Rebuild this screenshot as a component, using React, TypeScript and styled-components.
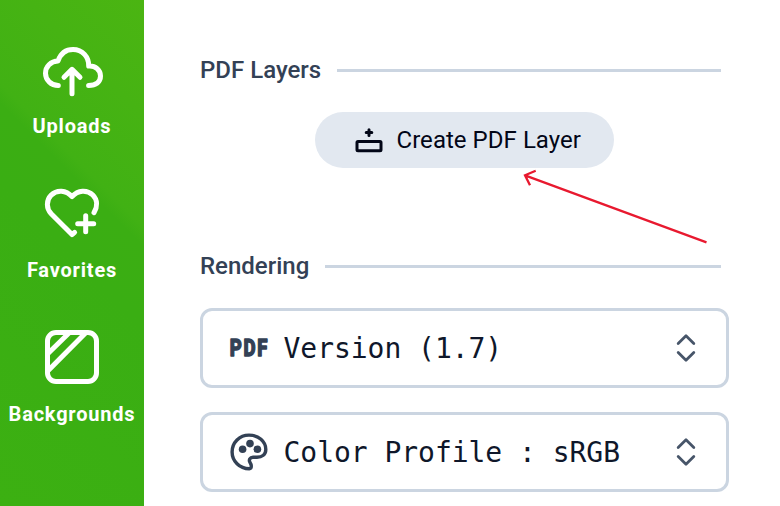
import React from 'react';
import styled, { createGlobalStyle } from 'styled-components';

const GlobalStyle = createGlobalStyle`
  * { box-sizing: border-box; }
  body { margin: 0; background: #fff; overflow: hidden; font-family: Roboto, sans-serif; }
`;

const Page = styled.div`
  display: flex;
  position: relative;
  width: 780px;
  height: 506px;
  background: #fff;
`;

const Sidebar = styled.nav`
  display: flex;
  flex-direction: column;
  flex: 0 0 144px;
  padding-top: 36px;
  background: linear-gradient(45deg, #3cb012 0%, #3aae13 50%, #3bae13 62%, #41b114 65%, #46b313 82%, #4bb512 100%);
`;

const SidebarItem = styled.a`
  display: flex;
  flex-direction: column;
  align-items: center;
  height: 144px;
  color: #fff;
`;

const SidebarIcon = styled.svg`
  width: 72px;
  height: 72px;
  fill: none;
  stroke: currentColor;
  stroke-width: 5;
  stroke-linecap: round;
  stroke-linejoin: round;
`;

const SidebarLabel = styled.span`
  margin-top: 4px;
  font-size: 20px;
  line-height: 28px;
  font-weight: 700;
  letter-spacing: 0.8px;
  white-space: nowrap;
`;

const Panel = styled.main`
  display: flex;
  flex-direction: column;
  width: 529px;
  margin-left: 56px;
  padding-top: 54px;
`;

const SectionTitle = styled.h2`
  display: flex;
  align-items: center;
  gap: 16px;
  height: 32px;
  margin: 0 8px 0 0;
  color: #334155;
  font-size: 24px;
  line-height: 32px;
  font-weight: 500;
  white-space: nowrap;

  &::after {
    content: '';
    flex: 1;
    height: 3px;
    margin-top: 1px;
    background: #cbd5e1;
  }
`;

const CreateButton = styled.button`
  display: flex;
  align-items: center;
  align-self: center;
  gap: 12.5px;
  width: 299px;
  height: 56px;
  margin: 26px 0 82px;
  padding: 0 0 0 39px;
  border: 0;
  border-radius: 28px;
  background: #e2e8f0;
  color: #020617;
  font: 450 24px/32px Roboto, sans-serif;
  letter-spacing: 0.04px;
  white-space: nowrap;
`;

const ButtonIcon = styled.svg`
  width: 30px;
  height: 30px;
  fill: none;
  stroke: currentColor;
  stroke-width: 3;
  stroke-linecap: round;
`;

const Fields = styled.div`
  display: grid;
  gap: 24px;
  margin-top: 26px;
`;

const Select = styled.div`
  display: flex;
  align-items: center;
  height: 80px;
  padding: 0 26px 0 25px;
  border: 3px solid #cbd5e1;
  border-radius: 12px;
  color: #0f172a;
`;

const SelectIcon = styled.svg`
  width: 42px;
  height: 42px;
  overflow: visible;
  color: #334155;
`;

const SelectValue = styled.span`
  flex: 1;
  margin-left: 13.5px;
  padding-top: 2px;
  font-family: 'DejaVu Sans Mono', monospace;
  font-size: 28px;
  line-height: 40px;
  letter-spacing: -0.035px;
  white-space: pre;
`;

const Chevrons = styled.svg`
  width: 28px;
  height: 36px;
  fill: none;
  stroke: #475569;
  stroke-width: 2.8;
  stroke-linecap: round;
  stroke-linejoin: round;
`;

const Pointer = styled.svg`
  position: absolute;
  left: 515px;
  top: 162px;
  width: 200px;
  height: 88px;
  fill: none;
  stroke: #e8192f;
  stroke-width: 2.3;
  pointer-events: none;
`;

const PdfText = styled.text`
  font: 800 23.5px Roboto, sans-serif;
  letter-spacing: 2.2px;
  fill: currentColor;
  stroke: currentColor;
  stroke-width: 1.4;
  stroke-linejoin: round;
`;

const UpDown = () => (
  <Chevrons viewBox="0 0 28 36">
    <path d="M6.2 13.5 14 5.8l7.8 7.7M6.2 22.5l7.8 7.7 7.8-7.7" />
  </Chevrons>
);

const PdfIcon = () => (
  <SelectIcon viewBox="0 0 42 42">
    <PdfText transform="translate(1.8 29.3) scale(0.79 1)">PDF</PdfText>
  </SelectIcon>
);

const PaletteIcon = () => (
  <SelectIcon viewBox="228 431 42 42">
    <path
      d="M249.3 468.7C239.5 468.7 232.1 461 232.1 452C232.1 442.5 239.5 435.1 249 435.1C258.5 435.1 265.8 441.5 265.8 449.5C265.8 454.5 262 457.3 257 457.3H253C250 457.3 248.5 460 250 462.5C250.8 463.7 251.3 464.7 251.3 466C251.3 467.7 250.7 468.7 249.3 468.7Z"
      fill="none"
      stroke="currentColor"
      strokeWidth="3.4"
    />
    <circle cx="242.6" cy="449.2" r="3.8" fill="currentColor" />
    <circle cx="250" cy="443.6" r="3.8" fill="currentColor" />
    <circle cx="257.4" cy="449.2" r="3.8" fill="currentColor" />
  </SelectIcon>
);

export default function App() {
  return (
    <>
      <GlobalStyle />
      <Page>
        <Sidebar>
          <SidebarItem>
            <SidebarIcon viewBox="36 36 72 72">
              <path d="M58.3 85.5C51 85.5 45.5 80 45.5 73.2C45.5 66.5 50.7 61.2 58 61C60.5 53.8 66 49.5 73 49.5C82.5 49.5 89 57 88.7 66C95.5 65.5 100.5 70 100.5 76C100.5 82 96 85.5 88.6 85.5" />
              <path d="M72 93.7V70M64 77.3L72 69.3L80 77.3" />
            </SidebarIcon>
            <SidebarLabel>Uploads</SidebarLabel>
          </SidebarItem>
          <SidebarItem>
            <SidebarIcon viewBox="36 180 72 72">
              <path d="M94 212.6C97.5 207 97.7 200 92.8 195.1C87 189.5 78 190 72 196.7C66 190 57 189.5 51.2 195.1C46 200.5 46.2 208.3 51.2 213.7L72 234.6L74.6 232.3" />
              <path d="M85.7 215.8V231.8M77.7 223.8H93.7" />
            </SidebarIcon>
            <SidebarLabel>Favorites</SidebarLabel>
          </SidebarItem>
          <SidebarItem>
            <SidebarIcon viewBox="36 324 72 72">
              <rect x="47.5" y="332.5" width="49" height="49" rx="8.5" />
              <path d="M48 353.5L69 333M48 370.8L85.5 333" />
            </SidebarIcon>
            <SidebarLabel>Backgrounds</SidebarLabel>
          </SidebarItem>
        </Sidebar>
        <Panel>
          <SectionTitle>PDF Layers</SectionTitle>
          <CreateButton>
            <ButtonIcon viewBox="354 125 30 30">
              <rect x="357" y="141.4" width="24" height="9.3" rx="1" />
              <path d="M369 129.8v5.6M366.2 132.6h5.6" />
            </ButtonIcon>
            Create PDF Layer
          </CreateButton>
          <SectionTitle>Rendering</SectionTitle>
          <Fields>
            <Select>
              <PdfIcon />
              <SelectValue>Version (1.7)</SelectValue>
              <UpDown />
            </Select>
            <Select>
              <PaletteIcon />
              <SelectValue>Color Profile : sRGB</SelectValue>
              <UpDown />
            </Select>
          </Fields>
        </Panel>
        <Pointer viewBox="515 162 200 88">
          <path d="M706.5 242.3L525 175.3M535.7 170.7L525 175.3L530 185.3" />
        </Pointer>
      </Page>
    </>
  );
}
